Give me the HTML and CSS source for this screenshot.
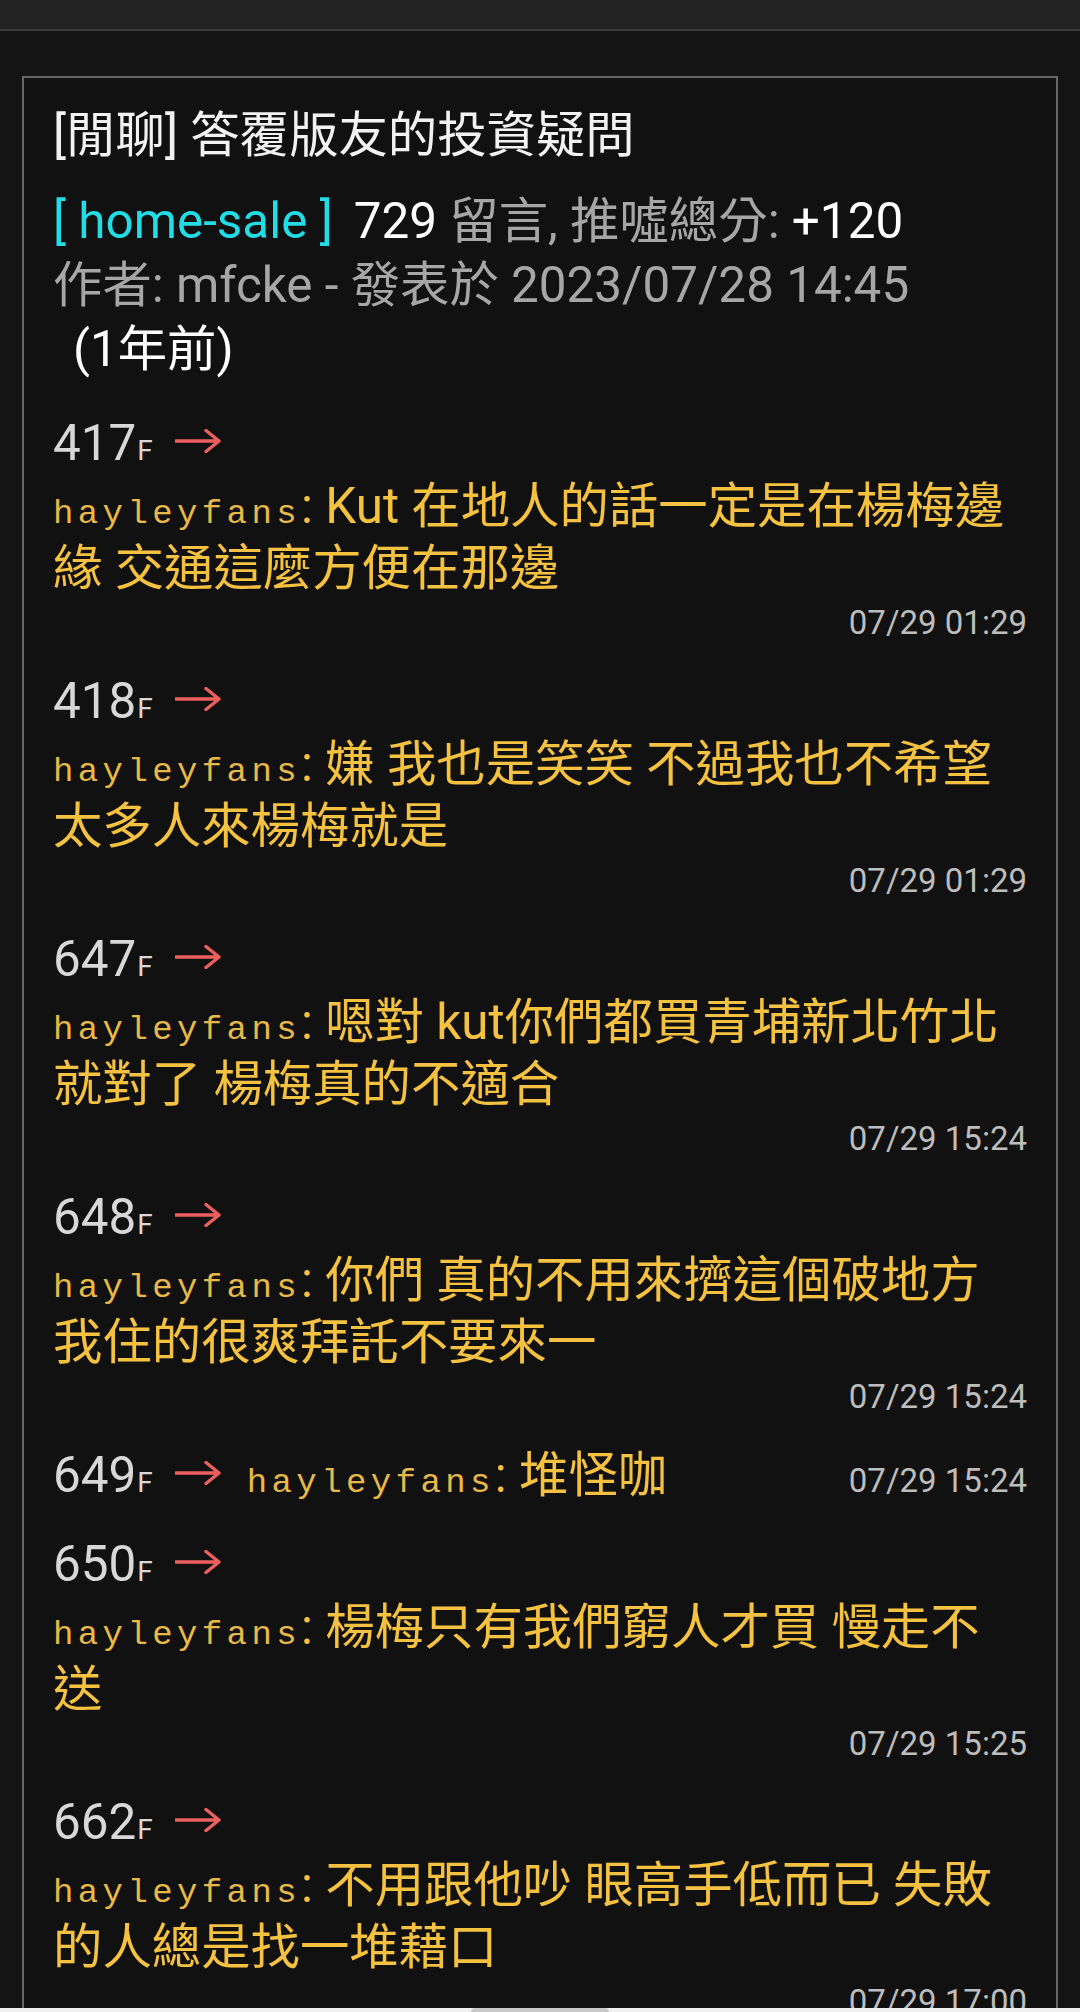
FILE: index.html
```html
<!DOCTYPE html>
<html lang="zh-Hant">
<head>
<meta charset="utf-8">
<title>[閒聊] 答覆版友的投資疑問</title>
<link rel="stylesheet" href="styles.css">
</head>
<body>
<div class="topbar"></div>
<main class="card">
  <h1 class="title">[閒聊] 答覆版友的投資疑問</h1>
  <div class="meta"><span class="board">[ home-sale ]</span><span class="hl">729</span> 留言, 推噓總分: <span class="hl">+120</span></div>
  <div class="meta">作者: mfcke - 發表於 2023/07/28 14:45 <span class="ago">(1年前)</span></div>

  <section class="comments">
    <article class="comment">
      <div class="head"><span class="floor">417<small>F</small></span><svg class="arrow" viewBox="0 0 46 24" width="46" height="24"><path d="M1 12H44M31 1.5L44 12L31 22.5"/></svg></div>
      <p class="text"><span class="user">hayleyfans</span>: Kut 在地人的話一定是在楊梅邊緣 交通這麼方便在那邊</p>
      <div class="time">07/29 01:29</div>
    </article>

    <article class="comment">
      <div class="head"><span class="floor">418<small>F</small></span><svg class="arrow" viewBox="0 0 46 24" width="46" height="24"><path d="M1 12H44M31 1.5L44 12L31 22.5"/></svg></div>
      <p class="text"><span class="user">hayleyfans</span>: 嫌 我也是笑笑 不過我也不希望太多人來楊梅就是</p>
      <div class="time">07/29 01:29</div>
    </article>

    <article class="comment">
      <div class="head"><span class="floor">647<small>F</small></span><svg class="arrow" viewBox="0 0 46 24" width="46" height="24"><path d="M1 12H44M31 1.5L44 12L31 22.5"/></svg></div>
      <p class="text"><span class="user">hayleyfans</span>: 嗯對 kut你們都買青埔新北竹北就對了 楊梅真的不適合</p>
      <div class="time">07/29 15:24</div>
    </article>

    <article class="comment">
      <div class="head"><span class="floor">648<small>F</small></span><svg class="arrow" viewBox="0 0 46 24" width="46" height="24"><path d="M1 12H44M31 1.5L44 12L31 22.5"/></svg></div>
      <p class="text"><span class="user">hayleyfans</span>: 你們 真的不用來擠這個破地方我住的很爽拜託不要來一</p>
      <div class="time">07/29 15:24</div>
    </article>

    <article class="comment single">
      <div class="head"><span class="floor">649<small>F</small></span><svg class="arrow" viewBox="0 0 46 24" width="46" height="24"><path d="M1 12H44M31 1.5L44 12L31 22.5"/></svg></div>
      <p class="text"><span class="user">hayleyfans</span>: 堆怪咖</p>
      <div class="time">07/29 15:24</div>
    </article>

    <article class="comment">
      <div class="head"><span class="floor">650<small>F</small></span><svg class="arrow" viewBox="0 0 46 24" width="46" height="24"><path d="M1 12H44M31 1.5L44 12L31 22.5"/></svg></div>
      <p class="text"><span class="user">hayleyfans</span>: 楊梅只有我們窮人才買 慢走不送</p>
      <div class="time">07/29 15:25</div>
    </article>

    <article class="comment">
      <div class="head"><span class="floor">662<small>F</small></span><svg class="arrow" viewBox="0 0 46 24" width="46" height="24"><path d="M1 12H44M31 1.5L44 12L31 22.5"/></svg></div>
      <p class="text"><span class="user">hayleyfans</span>: 不用跟他吵 眼高手低而已 失敗的人總是找一堆藉口</p>
      <div class="time">07/29 17:00</div>
    </article>
  </section>
</main>
<div class="navhint"><span class="pill"></span></div>
</body>
</html>
```

FILE: styles.css
```css
html, body {
  margin: 0;
  padding: 0;
  height: 100%;
  overflow: hidden;
}

body {
  background: #141414;
  font-family: Roboto, "Noto Sans CJK TC", "Noto Sans", sans-serif;
  color: #a6a6a6;
}

.topbar {
  height: 29px;
  background: #232323;
  border-bottom: 2px solid #3a3a3a;
}

.card {
  margin: 45px 22px 0;
  border: 2px solid #666666;
  background: #111111;
  padding: 25px 29px 0;
}

.title {
  margin: 0 0 22px;
  font-size: 49.4px;
  line-height: 64px;
  font-weight: 400;
  color: #f2f2f2;
}

.meta {
  font-size: 49.4px;
  line-height: 64px;
  color: #a6a6a6;
}

.board {
  color: #22dce6;
  margin-right: 21px;
}

.hl {
  color: #ffffff;
}

.ago {
  display: inline-block;
  margin-left: 20px;
  color: #ffffff;
}

.comments {
  margin-top: 30px;
  display: flex;
  flex-direction: column;
  gap: 22px;
}

.comment {
  display: flex;
  flex-direction: column;
}

.head {
  font-size: 49.4px;
  line-height: 64px;
  color: #d8d8d8;
  white-space: nowrap;
}

.floor small {
  font-size: 28px;
  line-height: 28px;
  margin-left: 1px;
}

.arrow {
  margin-left: 22px;
  vertical-align: 7px;
  fill: none;
  stroke: #ec5f5f;
  stroke-width: 3.4;
  stroke-linecap: round;
  stroke-linejoin: round;
}

.text {
  margin: 0;
  font-size: 49.4px;
  line-height: 62px;
  color: #f4c140;
}

.user {
  font-family: "Liberation Mono", "DejaVu Sans Mono", monospace;
  font-size: 34px;
  line-height: 34px;
  letter-spacing: 4.4px;
  color: #e8b947;
}

.time {
  text-align: right;
  font-size: 33px;
  line-height: 48px;
  color: #bdbdbd;
}

.comment.single {
  flex-direction: row;
  align-items: baseline;
  padding-top: 3px;
}

.comment.single .head,
.comment.single .text,
.comment.single .time {
  line-height: 58px;
}

.comment.single .text {
  margin-left: 26px;
}

.comment.single .time {
  margin-left: auto;
}

.navhint {
  position: fixed;
  left: 0;
  right: 0;
  bottom: 0;
  height: 4px;
  background: #f0f0f0;
  display: flex;
  justify-content: center;
}

.pill {
  width: 138px;
  height: 4px;
  background: #c9c9c9;
  border-radius: 6px 6px 0 0;
}
```
